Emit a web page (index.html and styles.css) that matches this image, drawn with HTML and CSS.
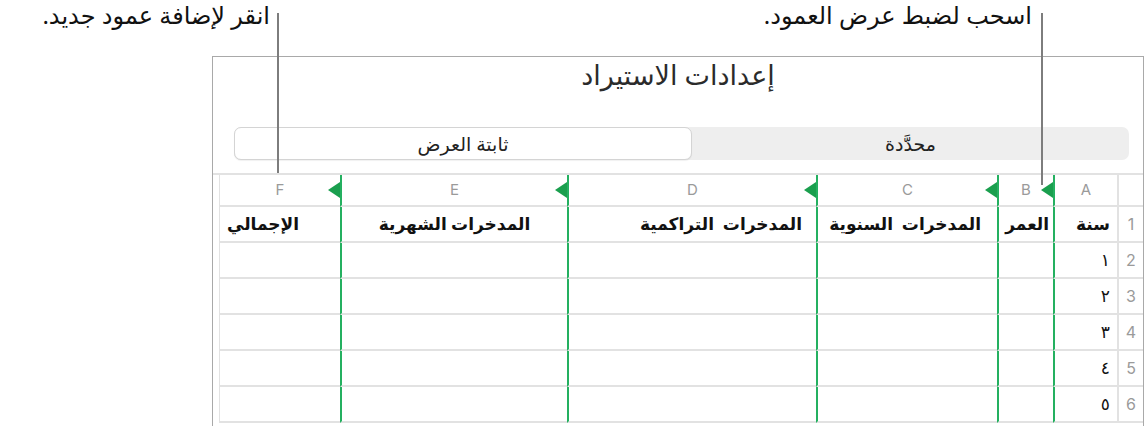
FILE: index.html
```html
<!DOCTYPE html>
<html lang="ar">
<head>
  <meta charset="UTF-8">
  <title>إعدادات الاستيراد</title>
  <link rel="stylesheet" href="styles.css">
</head>
<body>
  <!-- Callouts over the panel -->
  <div class="callout callout-add">انقر لإضافة عمود جديد.</div>
  <div class="callout callout-drag">اسحب لضبط عرض العمود.</div>
  <div class="callout-line line-add"></div>
  <div class="callout-line line-drag"></div>

  <div class="panel">
    <h1 class="panel-title">إعدادات الاستيراد</h1>

    <div class="segmented">
      <div class="seg seg-on">ثابتة العرض</div>
      <div class="seg">محدَّدة</div>
    </div>

    <div class="sheet">
      <div class="gutter"></div>
      <div class="grid">
        <!-- column letters -->
        <div class="cell head first">F<span class="handle"></span></div>
        <div class="cell head green">E<span class="handle"></span></div>
        <div class="cell head green">D<span class="handle"></span></div>
        <div class="cell head green">C<span class="handle"></span></div>
        <div class="cell head green">B<span class="handle"></span></div>
        <div class="cell head green">A</div>
        <div class="cell head num"></div>

        <!-- row 1 -->
        <div class="cell first bold col-f">الإجمالي</div>
        <div class="cell green bold col-e">المدخرات الشهرية</div>
        <div class="cell green bold col-d">المدخرات&nbsp; التراكمية</div>
        <div class="cell green bold col-c">المدخرات&nbsp; السنوية</div>
        <div class="cell green bold col-b">العمر</div>
        <div class="cell green bold">سنة</div>
        <div class="cell num">1</div>

        <div class="cell first"></div><div class="cell green"></div><div class="cell green"></div><div class="cell green"></div><div class="cell green"></div><div class="cell green">١</div><div class="cell num">2</div>
        <div class="cell first"></div><div class="cell green"></div><div class="cell green"></div><div class="cell green"></div><div class="cell green"></div><div class="cell green">٢</div><div class="cell num">3</div>
        <div class="cell first"></div><div class="cell green"></div><div class="cell green"></div><div class="cell green"></div><div class="cell green"></div><div class="cell green">٣</div><div class="cell num">4</div>
        <div class="cell first"></div><div class="cell green"></div><div class="cell green"></div><div class="cell green"></div><div class="cell green"></div><div class="cell green">٤</div><div class="cell num">5</div>
        <div class="cell first"></div><div class="cell green"></div><div class="cell green"></div><div class="cell green"></div><div class="cell green"></div><div class="cell green">٥</div><div class="cell num">6</div>
      </div>
    </div>
  </div>
</body>
</html>
```

FILE: styles.css
```css
/* Page */
body {
  margin: 0;
  width: 1146px;
  height: 426px;
  overflow: hidden;
  position: relative;
  background: #ffffff;
  font-family: "Noto Sans", "DejaVu Sans", sans-serif;
  color: #1a1a1a;
}

/* Callout labels and their pointer lines */
.callout {
  position: absolute;
  top: 0;
  direction: rtl;
  font-size: 24px;
  line-height: 30px;
  color: #111;
  white-space: nowrap;
}
.callout-add {
  right: 876px;
}
.callout-drag {
  right: 114px;
}
.callout-line {
  position: absolute;
  top: 13px;
  width: 2px;
  background: #7d7d7d;
  z-index: 5;
}
.line-add {
  left: 277px;
  height: 160px;
}
.line-drag {
  left: 1041px;
  height: 172px;
}

/* Settings panel */
.panel {
  margin: 56px 0 0 212px;
  width: 930px;
  height: 380px;
  border: 1px solid #a9a9a9;
  border-bottom: none;
  box-sizing: content-box;
}
.panel-title {
  margin: 0;
  height: 70px;
  direction: rtl;
  text-align: center;
  font-size: 27px;
  font-weight: normal;
  line-height: 36px;
  color: #2b2b2b;
}

/* Segmented control */
.segmented {
  display: flex;
  margin: 0 14px 13px 21px;
  height: 33px;
  background: #eeeeee;
  border-radius: 7px;
  direction: ltr;
}
.seg {
  flex: 1;
  display: flex;
  align-items: center;
  justify-content: center;
  direction: rtl;
  font-size: 19px;
  color: #222;
}
.seg-on {
  flex: 0 0 458px;
  box-sizing: border-box;
  background: #ffffff;
  border: 1px solid #d4d4d4;
  border-radius: 7px;
  box-shadow: 0 1px 1px rgba(0, 0, 0, 0.06);
}

/* Spreadsheet preview */
.sheet {
  display: flex;
  border-top: 2px solid #e2e2e2;
}
.gutter {
  width: 6px;
}
.grid {
  display: grid;
  grid-template-columns: 121px 227px 249px 181px 56px 64px 26px;
  grid-template-rows: 32px repeat(6, 36px);
}
.cell {
  position: relative;
  box-sizing: border-box;
  border-bottom: 2px solid #e2e2e2;
  border-left: 2px solid #e2e2e2;
  direction: rtl;
  text-align: right;
  padding: 0 7px;
  font-size: 17px;
  line-height: 34px;
  color: #111;
  white-space: nowrap;
}
.cell.green {
  border-left-color: #24b060;
}
.cell.first {
  border-left-width: 1px;
}
.cell.bold {
  font-weight: bold;
}
.cell.col-f {
  text-align: left;
}
.cell.col-e {
  text-align: center;
}
.cell.col-d {
  padding-right: 14px;
}
.cell.col-c {
  padding-right: 16px;
}
.cell.col-b {
  padding: 0 4px;
}
.cell.num {
  padding: 0;
  text-align: center;
  color: #9a9a9a;
  font-size: 16px;
  font-family: "Inter", "Noto Sans", sans-serif;
}
.cell.head {
  text-align: center;
  font-family: "Inter", "Noto Sans", sans-serif;
  font-size: 15px;
  line-height: 30px;
  color: #9a9a9a;
}

/* Resize handle on the right edge of each column header */
.handle {
  position: absolute;
  right: 0;
  top: 7px;
  width: 0;
  height: 0;
  border-top: 8px solid transparent;
  border-bottom: 8px solid transparent;
  border-right: 12px solid #1a9f4e;
}
```
